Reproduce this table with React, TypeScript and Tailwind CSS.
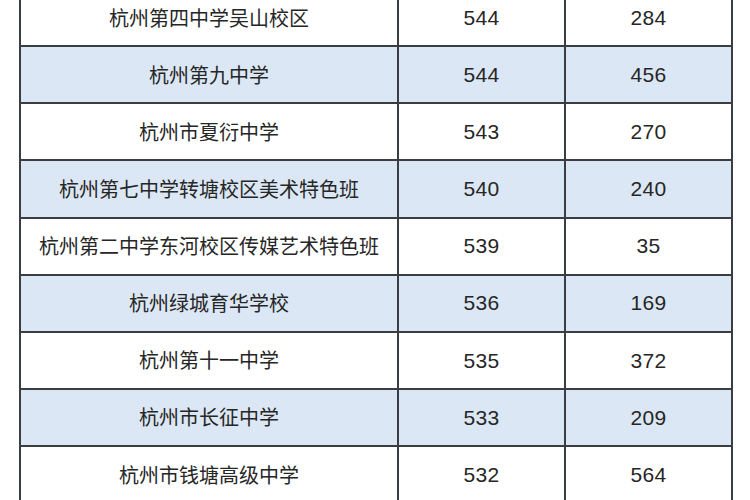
const rows = [
  { name: "杭州第四中学吴山校区", score: "544", count: "284" },
  { name: "杭州第九中学", score: "544", count: "456" },
  { name: "杭州市夏衍中学", score: "543", count: "270" },
  { name: "杭州第七中学转塘校区美术特色班", score: "540", count: "240" },
  { name: "杭州第二中学东河校区传媒艺术特色班", score: "539", count: "35" },
  { name: "杭州绿城育华学校", score: "536", count: "169" },
  { name: "杭州第十一中学", score: "535", count: "372" },
  { name: "杭州市长征中学", score: "533", count: "209" },
  { name: "杭州市钱塘高级中学", score: "532", count: "564" },
];

const App = () => {
  return (
    <div className="w-[750px] h-[500px] overflow-hidden bg-white">
      <div
        className="-mt-[12px] ml-[19px] w-[714px] border-x-2 border-t-2 border-[#3a3d42] text-[#262626] text-[20px]"
        style={{ fontFamily: '"Noto Sans CJK SC", "Liberation Sans", sans-serif' }}
      >
        {rows.map((row, i) => (
          <div
            key={row.name}
            className={`grid grid-cols-[376px_2px_165px_2px_165px] h-[57.14px] border-b-2 border-[#3a3d42] ${
              i % 2 === 1 ? "bg-[#dbe7f4]" : "bg-white"
            }`}
          >
            <div className="flex items-center justify-center">{row.name}</div>
            <div className="bg-[#3a3d42]" />
            <div className="flex items-center justify-center font-['Liberation_Sans',sans-serif] text-[21px] tracking-[0.3px]">
              {row.score}
            </div>
            <div className="bg-[#3a3d42]" />
            <div className="flex items-center justify-center font-['Liberation_Sans',sans-serif] text-[21px] tracking-[0.3px]">
              {row.count}
            </div>
          </div>
        ))}
      </div>
    </div>
  );
};

export default App;
